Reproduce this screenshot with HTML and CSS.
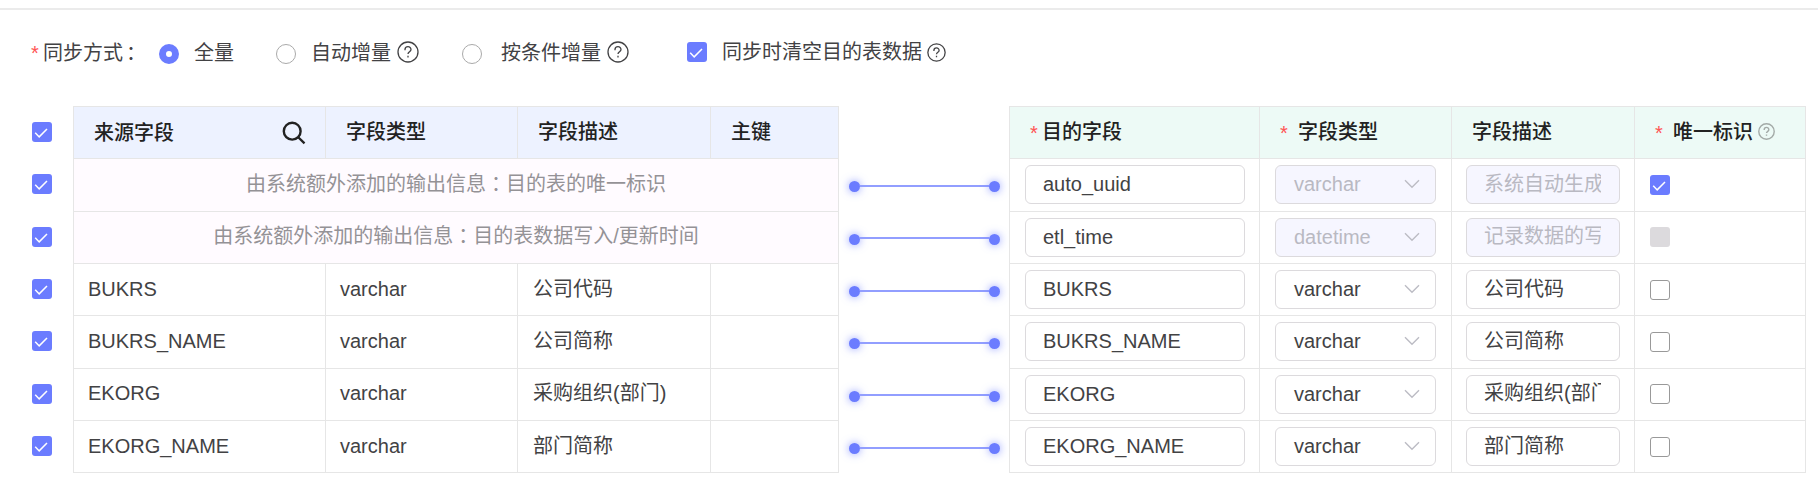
FILE: index.html
```
<!DOCTYPE html>
<html lang="zh-CN">
<head>
<meta charset="utf-8">
<title>字段映射</title>
<link rel="stylesheet" href="styles.css">
</head>
<body>
<svg class="defs" aria-hidden="true">
  <symbol id="help" viewBox="0 0 22 22"><circle cx="11" cy="11" r="10" /><path d="M8 9.2V8.6a3 2.9 0 0 1 6 0c0 2.2-3 2.2-3 4.5M11 14.8v1.6" /></symbol>
  <symbol id="check" viewBox="0 0 20 20"><path d="M3.2 10.8l4 4.1L15 7" /></symbol>
  <symbol id="chevron" viewBox="0 0 16 10"><path d="M1 1.2l7 7 7-7" /></symbol>
  <symbol id="search" viewBox="0 0 24 24"><circle cx="10.2" cy="10.2" r="8.4" /><path d="M16.5 16.5l6 5.8" /></symbol>
</svg>
<div class="divider"></div>

<form class="sync">
  <span class="star">*</span>
  <span class="sync-label">同步方式<span class="colon">：</span></span>
  <span class="radio radio-on"></span><span class="option full">全量</span>
  <span class="radio"></span><span class="option">自动增量</span><svg class="help help-lg auto"><use href="#help"/></svg>
  <span class="radio"></span><span class="option wide">按条件增量</span><svg class="help help-lg cond"><use href="#help"/></svg>
  <span class="box on"><svg><use href="#check"/></svg></span><span class="clear">同步时清空目的表数据</span><svg class="help help-md"><use href="#help"/></svg>
</form>

<main class="mapping">
  <div class="rows picks">
    <div><span class="box on"><svg><use href="#check"/></svg></span></div>
    <div><span class="box on"><svg><use href="#check"/></svg></span></div>
    <div><span class="box on"><svg><use href="#check"/></svg></span></div>
    <div><span class="box on"><svg><use href="#check"/></svg></span></div>
    <div><span class="box on"><svg><use href="#check"/></svg></span></div>
    <div><span class="box on"><svg><use href="#check"/></svg></span></div>
    <div><span class="box on"><svg><use href="#check"/></svg></span></div>
  </div>

  <section class="rows table source">
    <div class="row head"><div class="low">来源字段<svg class="search"><use href="#search"/></svg></div><div>字段类型</div><div>字段描述</div><div>主键</div></div>
    <div class="row extra"><div>由系统额外添加的输出信息<span class="colon">：</span>目的表的唯一标识</div></div>
    <div class="row extra"><div>由系统额外添加的输出信息<span class="colon">：</span>目的表数据写入/更新时间</div></div>
    <div class="row"><div>BUKRS</div><div>varchar</div><div>公司代码</div><div></div></div>
    <div class="row"><div>BUKRS_NAME</div><div>varchar</div><div>公司简称</div><div></div></div>
    <div class="row"><div>EKORG</div><div>varchar</div><div>采购组织(部门)</div><div></div></div>
    <div class="row"><div>EKORG_NAME</div><div>varchar</div><div>部门简称</div><div></div></div>
  </section>

  <div class="rows links">
    <div></div>
    <div class="link"><i></i><b></b><i></i></div>
    <div class="link"><i></i><b></b><i></i></div>
    <div class="link"><i></i><b></b><i></i></div>
    <div class="link"><i></i><b></b><i></i></div>
    <div class="link"><i></i><b></b><i></i></div>
    <div class="link"><i></i><b></b><i></i></div>
  </div>

  <section class="rows table target">
    <div class="row head">
      <div><span class="star tight">*</span>目的字段</div>
      <div><span class="star">*</span>字段类型</div>
      <div>字段描述</div>
      <div><span class="star">*</span>唯一标识<svg class="help help-sm"><use href="#help"/></svg></div>
    </div>
    <div class="row">
      <div><span class="field">auto_uuid</span></div>
      <div><span class="field select off">varchar<svg><use href="#chevron"/></svg></span></div>
      <div><span class="field desc off"><span>系统自动生成</span></span></div>
      <div><span class="box on"><svg><use href="#check"/></svg></span></div>
    </div>
    <div class="row">
      <div><span class="field">etl_time</span></div>
      <div><span class="field select off">datetime<svg><use href="#chevron"/></svg></span></div>
      <div><span class="field desc off"><span>记录数据的写</span></span></div>
      <div><span class="box locked"></span></div>
    </div>
    <div class="row">
      <div><span class="field">BUKRS</span></div>
      <div><span class="field select">varchar<svg><use href="#chevron"/></svg></span></div>
      <div><span class="field desc"><span>公司代码</span></span></div>
      <div><span class="box"></span></div>
    </div>
    <div class="row">
      <div><span class="field">BUKRS_NAME</span></div>
      <div><span class="field select">varchar<svg><use href="#chevron"/></svg></span></div>
      <div><span class="field desc"><span>公司简称</span></span></div>
      <div><span class="box"></span></div>
    </div>
    <div class="row">
      <div><span class="field">EKORG</span></div>
      <div><span class="field select">varchar<svg><use href="#chevron"/></svg></span></div>
      <div><span class="field desc"><span>采购组织(部门)</span></span></div>
      <div><span class="box"></span></div>
    </div>
    <div class="row">
      <div><span class="field">EKORG_NAME</span></div>
      <div><span class="field select">varchar<svg><use href="#chevron"/></svg></span></div>
      <div><span class="field desc"><span>部门简称</span></span></div>
      <div><span class="box"></span></div>
    </div>
  </section>
</main>
</body>
</html>
```

FILE: styles.css
```
* { box-sizing: border-box; }
body {
  margin: 0;
  padding-top: 8px;
  height: 484px;
  overflow: hidden;
  background: #fff;
  color: #424244;
  font: 20px/24px "Liberation Sans", "Noto Sans CJK SC", sans-serif;
  white-space: nowrap;
}
svg { display: block; flex: none; fill: none; stroke: currentColor; }
.defs { position: absolute; width: 0; height: 0; }
.divider { height: 2px; background: #ebebeb; }
.colon { font-family: "Noto Sans CJK TC", sans-serif; }
.star { width: 18px; padding-top: 2px; color: #ff5353; font-size: 20px; font-weight: 400; flex: none; }
.star.tight { width: 12px; }

/* sync options */
.sync { display: flex; align-items: center; height: 96px; padding: 0 0 12px 31px; }
.sync .star { width: 12px; }
.sync-label { width: 116px; }
.sync-label .colon { padding-left: 3px; margin-right: -3px; }
.radio { width: 20px; height: 20px; border: 1px solid #aaa; border-radius: 50%; flex: none; position: relative; top: 2px; }
.radio-on { border: 7px solid #6b7cff; }
.option { margin-left: 15px; padding-top: 2px; }
.full { margin-right: 42px; }
.wide { margin-left: 19px; }
.clear { margin-left: 15px; }
.help { stroke-width: 1.3; }
.help-lg { width: 22px; height: 22px; margin-left: 6px; }
.auto { margin-right: 43px; }
.cond { margin-right: 58px; }
.help-md { width: 19px; height: 19px; margin-left: 5px; stroke-width: 1.5; }
.help-sm { width: 17px; height: 17px; margin-left: 5px; color: #a3aaa7; stroke-width: 1.8; }

.box { display: block; flex: none; width: 20px; height: 20px; border: 1px solid #999; border-radius: 3px; background: #fff; }
.box.on { border: 0; background: #6b7cff; color: #fff; }
.box.on svg { width: 20px; height: 20px; stroke-width: 1.5; }
.box.locked { border: 0; background: #dcdadd; }

/* mapping tables */
.mapping { display: flex; padding-left: 32px; }
.rows { display: grid; grid-template-rows: repeat(7, 52.33px); }
.picks { width: 41px; }
.picks > div { display: flex; align-items: center; }
.table { border: solid #e6e6e6; border-width: 1px 0 0 1px; }
.row { display: grid; }
.row > div { display: flex; align-items: center; min-width: 0; border: solid #e6e6e6; border-width: 0 1px 1px 0; }
.head { font-weight: 500; color: #222; }
.head > div { padding-bottom: 2px; }
.source { width: 766px; }
.source .row { grid-template-columns: 252px 192px 193px 1fr; }
.source .row > div { padding: 0 0 2px 14px; }
.source .row > div:nth-child(3) { padding-left: 15px; }
.source .head { background: #edf2ff; }
.source .head > div,
.source .head > div:nth-child(3) { padding-left: 20px; }
.source .head .low { justify-content: space-between; padding: 0 19px 0 20px; }
.search { width: 24px; height: 24px; stroke-width: 2.4; }
.source .extra { grid-template-columns: 1fr; background: #fffbff; color: #949296; }
.source .extra > div { justify-content: center; padding: 0 0 2px; }

.links { width: 170px; padding: 0 9.5px 0 10px; }
.link { display: flex; align-items: center; padding-top: 5px; }
.link i { width: 11px; height: 11px; border-radius: 50%; background: #6b7cff; box-shadow: 0 0 9px rgba(107, 124, 255, .75); }
.link b { flex: 1; height: 2px; margin-top: -2px; background: #929eff; }

.target { width: 797px; }
.target .row { grid-template-columns: 250px 192px 183px 1fr; }
.target .row > div { padding-left: 15px; }
.target .row > div:nth-child(3) { padding-left: 14px; }
.target .head { background: #edfaf6; }
.target .head > div,
.target .head > div:nth-child(3) { padding-left: 20px; }
.field { display: flex; align-items: center; width: 220px; height: 39px; padding: 0 16px 1px 17px; border: 1px solid #dcdadd; border-radius: 6px; background: #fff; }
.select { width: 161px; padding-left: 18px; padding-right: 15px; justify-content: space-between; }
.select svg { width: 16px; height: 10px; color: #bcbcc4; stroke-width: 1.4; }
.desc { width: 154px; padding: 0 18px 2px 17px; }
.desc span { overflow: hidden; flex: 1; }
.off { background: #f6f6ff; color: #b9b9c2; }
```
